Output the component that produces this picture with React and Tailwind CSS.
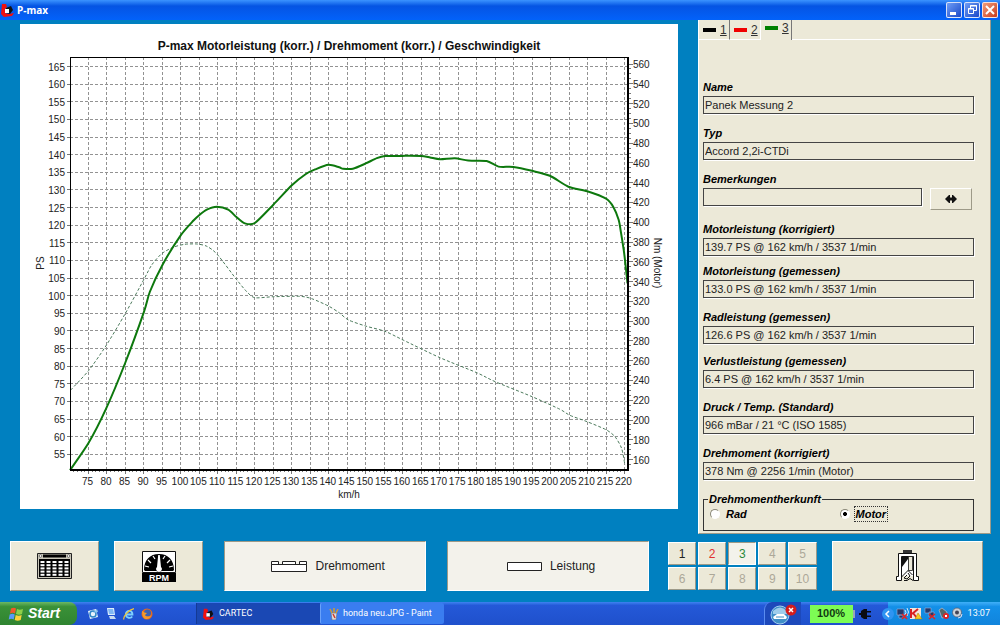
import React, { useState } from 'react';

const POWER = [
  [70, 50.5], [75, 58.2], [79.7, 67.8], [85, 81.1], [90, 95.4], [91.6, 101.1], [95, 108.7], [99.8, 116.9],
  [103.4, 121.3], [105, 122.9], [107, 124.4], [109.7, 125.2], [112.8, 124.4], [115, 122.3], [117.3, 120.5],
  [120, 120.6], [125, 125.8], [130, 131.3], [133.8, 134.5], [136.3, 135.8], [139.9, 137.1], [142.8, 136.4],
  [143.9, 136], [146.5, 136], [150, 137.5], [153, 139], [155.2, 139.6], [159.3, 139.6], [162, 139.7],
  [165, 139.6], [167.4, 139.2], [170.1, 138.7], [174.1, 139], [177.7, 138.3], [182.7, 138.2], [185.9, 136.6],
  [189.9, 136.5], [195, 135.4], [199.8, 134], [204.8, 130.9], [209.9, 129.6], [215, 127.5], [217, 125.1],
  [218.4, 121.5], [219, 118.1], [219.9, 112], [220.8, 103.5],
];

const TORQUE = [
  [70.2, 230.4], [75, 249.9], [79.7, 274.9], [85, 308], [90, 342.3], [92.1, 356.8], [94.8, 368.2],
  [97.9, 374.7], [101, 377.7], [104.3, 378], [107, 375.7], [109.8, 367.6], [115, 342.3], [117.8, 329.8],
  [120, 323.7], [125, 324.7], [132.2, 325.1], [135.4, 322.7], [139.9, 315.3], [142.8, 308.5], [145.3, 301.2],
  [150, 295], [155.2, 289.7], [160.1, 280.9], [170.1, 263], [180, 247.9], [185, 238.8], [195, 223.6],
  [202.5, 210.9], [205.2, 204.8], [209.9, 198.3], [215, 190.2], [217.4, 183.2], [219.2, 171.4], [220.1, 154.5],
];

const PLOT = { left: 50, right: 608, top: 33, bottom: 446 };

const xAt = (kmh) => 68.5 + (kmh - 75) * 3.697;
const yPs = (ps) => 42.5 + (165 - ps) * 3.525;
const yNm = (nm) => 40 + (560 - nm) * 0.989;

const range = (from, to, step) => {
  const out = [];
  for (let v = from; v <= to; v += step) out.push(v);
  return out;
};

// Catmull-Rom through all points
function curve(points, yAt) {
  const p = points.map(([a, b]) => [xAt(a), yAt(b)]);
  let d = `M${p[0][0]},${p[0][1]}`;
  for (let i = 0; i < p.length - 1; i++) {
    const a = p[i - 1] || p[i];
    const b = p[i];
    const c = p[i + 1];
    const e = p[i + 2] || c;
    d += `C${b[0] + (c[0] - a[0]) / 8},${b[1] + (c[1] - a[1]) / 8} ${c[0] - (e[0] - b[0]) / 8},${c[1] - (e[1] - b[1]) / 8} ${c[0]},${c[1]}`;
  }
  return d;
}

const FIELDS = [
  { id: 'name', label: 'Name', value: 'Panek Messung 2', gap: 'mt-3' },
  { id: 'typ', label: 'Typ', value: 'Accord 2,2i-CTDi', gap: 'mt-3' },
  { id: 'bemerkungen', label: 'Bemerkungen', value: '', gap: 'mt-3', swap: true },
  { id: 'pmot-korr', label: 'Motorleistung (korrigiert)', value: '139.7 PS @ 162 km/h / 3537 1/min', gap: 'mt-4' },
  { id: 'pmot-gem', label: 'Motorleistung (gemessen)', value: '133.0 PS @ 162 km/h / 3537 1/min', gap: 'mt-2' },
  { id: 'prad', label: 'Radleistung (gemessen)', value: '126.6 PS @ 162 km/h / 3537 1/min', gap: 'mt-3' },
  { id: 'pverl', label: 'Verlustleistung (gemessen)', value: '6.4 PS @ 162 km/h / 3537 1/min', gap: 'mt-2.5' },
  { id: 'druck', label: 'Druck / Temp. (Standard)', value: '966 mBar / 21 °C (ISO 1585)', gap: 'mt-3' },
  { id: 'mkorr', label: 'Drehmoment (korrigiert)', value: '378 Nm @ 2256 1/min (Motor)', gap: 'mt-3' },
];

const TABS = [
  { n: 1, color: 'bg-black' },
  { n: 2, color: 'bg-[#f00000]' },
  { n: 3, color: 'bg-[#008000]' },
];

const RAISED = 'bg-[#ece9d8] border border-t-white border-l-white border-b-[#9d9a88] border-r-[#9d9a88]';
const SUNKEN = 'bg-[#f3f2eb] border border-t-[#9d9a88] border-l-[#9d9a88] border-b-white border-r-white';

function CartecIcon({ className }) {
  return (
    <svg viewBox="0 0 14 14" className={className} aria-hidden="true">
      <path d="M1 1h4l1 3-2 2v4l4 1 5-1-2 3-8 1-3-3z" fill="#f01010" />
      <path d="M5 5l5-2 2 4-3 4-4-1z" fill="#101010" />
      <path d="M4 6h4v4H4z" fill="#fff" />
    </svg>
  );
}

function TitleBar() {
  return (
    <header className="h-5 flex items-center pl-px pr-0.5 bg-linear-to-b from-[#3b93ff] via-[#0554e3] via-30% to-[#0262fa] text-white">
      <CartecIcon className="w-3.5 h-3.5" />
      <h1 className="ml-0.5 text-[10px] font-bold font-['Noto_Sans',sans-serif]">P-max</h1>
      <div className="ml-auto flex gap-0.5">
        <button aria-label="Minimieren" className="w-4 h-4 rounded-xs border border-white/80 bg-linear-to-br from-[#6f9cf5] to-[#1c47c8]">
          <svg viewBox="0 0 14 14" aria-hidden="true"><path d="M3 9h6v3H3z" fill="#fff" /></svg>
        </button>
        <button aria-label="Wiederherstellen" className="w-4 h-4 rounded-xs border border-white/80 bg-linear-to-br from-[#6f9cf5] to-[#1c47c8]">
          <svg viewBox="0 0 14 14" fill="none" stroke="#fff" aria-hidden="true">
            <path d="M5.500 5V2.500h6v5H9" />
            <path d="M5 3h7" />
            <path d="M3.500 5.500h5v5h-5z" />
            <path d="M3 6h6" />
          </svg>
        </button>
        <button aria-label="Schließen" className="w-4 h-4 rounded-xs border border-white/80 bg-linear-to-br from-[#f09a78] to-[#c8381c]">
          <svg viewBox="0 0 14 14" stroke="#fff" strokeWidth="2" aria-hidden="true"><path d="M3 3l8 8M11 3l-8 8" /></svg>
        </button>
      </div>
    </header>
  );
}

function PowerChart() {
  const { left, right, top, bottom } = PLOT;
  return (
    <svg viewBox="0 0 658 485" className="w-full h-auto block bg-white font-['Liberation_Sans',Arial,sans-serif] text-[10px]" fill="#222">
      <text x="329" y="26" textAnchor="middle" className="text-[12px] font-bold" fill="#111">
        P-max Motorleistung (korr.) / Drehmoment (korr.) / Geschwindigkeit
      </text>

      {/* Grid */}
      <g stroke="#929292" strokeDasharray="3 2" shapeRendering="crispEdges">
        {range(55, 165, 5).map((v) => (
          <line key={v} x1={left} x2={right} y1={yPs(v)} y2={yPs(v)} />
        ))}
        {range(75, 220, 5).map((v) => (
          <line key={v} x1={xAt(v)} x2={xAt(v)} y1={top} y2={bottom} />
        ))}
      </g>

      {/* Ticks */}
      <g stroke="#777" shapeRendering="crispEdges">
        {range(55, 165, 5).map((v) => (
          <line key={v} x1={left - 3} x2={left} y1={yPs(v)} y2={yPs(v)} />
        ))}
        {range(155, 560, 5).map((v) => (
          <line key={v} x1={right} x2={right + (v % 20 ? 3 : 5)} y1={yNm(v)} y2={yNm(v)} />
        ))}
        {range(71, 220, 1).map((v) => (
          <line key={v} x1={xAt(v)} x2={xAt(v)} y1={bottom} y2={bottom + (v % 5 ? 2 : 4)} />
        ))}
      </g>

      <path d={curve(TORQUE, yNm)} fill="none" stroke="#4c7a5c" strokeDasharray="3 2" />
      <path d={curve(POWER, yPs)} fill="none" stroke="#0d780d" strokeWidth="2" strokeLinejoin="round" />

      {/* Frame */}
      <g stroke="#000" shapeRendering="crispEdges">
        <line x1={left} x2={right} y1={top + 0.5} y2={top + 0.5} />
        <line x1={left + 0.5} x2={left + 0.5} y1={top} y2={bottom} />
        <line x1={left} x2={right + 1} y1={bottom} y2={bottom} strokeWidth="2" />
        <line x1={right} x2={right} y1={top} y2={bottom} strokeWidth="2" />
      </g>

      <g textAnchor="end">
        {range(55, 165, 5).map((v) => (
          <text key={v} x="45" y={yPs(v) + 4}>{v}</text>
        ))}
      </g>
      <g>
        {range(160, 560, 20).map((v) => (
          <text key={v} x="613" y={yNm(v) + 4}>{v}</text>
        ))}
      </g>
      <g textAnchor="middle">
        {range(75, 220, 5).map((v) => (
          <text key={v} x={xAt(v) - 1} y="461">{v}</text>
        ))}
        <text x="329" y="474">km/h</text>
        <text transform="translate(24 239) rotate(-90)">PS</text>
        <text transform="translate(634 239) rotate(90)">Nm (Motor)</text>
      </g>
    </svg>
  );
}

function Field({ field }) {
  return (
    <div className={field.gap}>
      <label htmlFor={field.id} className="block h-4 leading-[14px] text-[11px] font-bold italic text-black">
        {field.label}
      </label>
      <div className="flex items-start gap-2">
        <input
          id={field.id}
          defaultValue={field.value}
          className="flex-1 min-w-0 h-[18px] border border-[#444] bg-[#ece9d8] px-px text-[11px] text-[#222] shadow-[1px_1px_0_#fff] outline-none"
        />
        {field.swap && (
          <button aria-label="Tauschen" className={`${RAISED} w-[42px] h-[22px] -mb-1 mr-0.5 flex items-center justify-center`}>
            <svg viewBox="0 0 12 10" className="w-3 h-2.5" fill="#111" aria-hidden="true">
              <path d="M0 5l4-4h1v2.500h2V1h1l4 4-4 4H7V6.500H5V9H4z" />
            </svg>
          </button>
        )}
      </div>
    </div>
  );
}

function MeasurementPanel() {
  const [tab, setTab] = useState(3);
  const [source, setSource] = useState('motor');

  return (
    <aside className="w-[293px] shrink-0 bg-[#ece9d8] border-l border-white border-r border-b border-r-[#9d9a88] border-b-[#9d9a88]">
      <div role="tablist" className="flex h-5 items-stretch text-xs text-[#333]">
        {TABS.map((t) => (
          <button
            key={t.n}
            role="tab"
            aria-selected={tab === t.n}
            onClick={() => setTab(t.n)}
            className={`flex items-center gap-1 pl-1 pr-0.5 w-[31px] border-r ${
              t.n === 2 ? 'border-r-white' : 'border-r-[#777]'
            } ${tab === t.n ? 'pb-1' : 'border-b border-b-white'}`}
          >
            <span className={`w-[13px] h-1 ${t.color}`} />
            <span className="underline">{t.n}</span>
          </button>
        ))}
        <div className="flex-1 border-b border-white" />
      </div>

      <div className="pl-1 pr-4 pt-7 pb-0.5">
        {FIELDS.map((f) => (
          <Field key={f.id} field={f} />
        ))}

        <fieldset className="mt-3 h-[39px] border border-[#333] px-1 text-[11px] font-bold italic text-black">
          <legend className="leading-[14px] px-px">Drehmomentherkunft</legend>
          <div className="flex items-center pl-0.5">
            {[['rad', 'Rad'], ['motor', 'Motor']].map(([id, label]) => (
              <label key={id} className="w-1/2 flex items-center gap-1">
                <input
                  type="radio"
                  name="source"
                  checked={source === id}
                  onChange={() => setSource(id)}
                  className="appearance-none w-2.5 h-2.5 rounded-full border border-[#8a8878] border-b-white border-r-white bg-white checked:bg-[radial-gradient(circle,#000_30%,#fff_40%)]"
                />
                <span className={`px-px leading-[14px] border border-dotted ${source === id ? 'border-[#333]' : 'border-transparent'}`}>
                  {label}
                </span>
              </label>
            ))}
          </div>
        </fieldset>
      </div>
    </aside>
  );
}

function TableIcon() {
  return (
    <svg viewBox="0 0 35 26" className="w-[35px] h-[26px]" aria-hidden="true">
      <path d="M.5.5h34v25H.5z" fill="#c9c6b8" stroke="#222" />
      <path d="M6 1.500h23v3H6zM2 6h31v18H2z" fill="#000" />
      <circle cx="3.500" cy="3" r="1.300" fill="#fff" stroke="#333" strokeWidth=".6" />
      <circle cx="31.500" cy="3" r="1.300" fill="#fff" stroke="#333" strokeWidth=".6" />
      {range(0, 4, 1).map((r) =>
        range(0, 4, 1).map((c) => <rect key={`${r}-${c}`} x={3.5 + c * 6} y={8 + r * 3.2} width="4" height="2" fill="#fff" />)
      )}
    </svg>
  );
}

function RpmIcon() {
  return (
    <svg viewBox="0 0 34 31" className="w-[34px] h-[31px]" aria-hidden="true">
      <path d="M.5.5h33v21H.5z" fill="#fff" stroke="#111" />
      <path d="M2 19C2 9 8 3 17 3s15 6 15 16l-1 1H20l-3 1-3-1H3z" fill="#000" />
      <path d="M3 15l4 1M6 9l3 3M11 5l2 3M23 5l-2 3M28 9l-3 3M31 15l-4 1" stroke="#fff" strokeWidth="1.200" />
      <path d="M16.200 4h1.600l1.200 12a2.800 2.800 0 1 1-4 0z" fill="#fff" />
      <path d="M0 22h34v9H0z" fill="#000" />
      <text x="17" y="30" textAnchor="middle" fill="#fff" className="text-[9px] font-bold font-['Liberation_Sans',Arial,sans-serif]">RPM</text>
    </svg>
  );
}

function DoorIcon() {
  return (
    <svg viewBox="0 0 24 32" className="w-6 h-8" aria-hidden="true">
      <path d="M8 0h9v3H8z" fill="#333" />
      <path d="M3.500 3.500h18v23h2v4h-5v-24h-12v24h-5v-4h2z" fill="#fff" stroke="#111" />
      <path d="M7 7h11v19H7z" fill="#fff" />
      <path d="M7 7h6v2l-6 8z" fill="#111" />
      <path d="M13.500 6.500h4v14h-4z" fill="#ece9d8" stroke="#111" strokeWidth=".8" />
      <path d="M13.500 20l-4 4-3 3M13.500 21l4 4M13 23l2 3-3 3-3-1 3-3M9 30.500h3l3-2 3 2" fill="none" stroke="#111" />
    </svg>
  );
}

function ButtonBar() {
  const [modes, setModes] = useState({ drehmoment: true, leistung: true });
  const [slot, setSlot] = useState(3);
  const toggle = (key) => setModes({ ...modes, [key]: !modes[key] });

  const slotColor = (n) => {
    if (n === 1) return 'text-[#222]';
    if (n === 2) return 'text-[#e03030]';
    if (n === 3) return 'text-[#2a8a3a]';
    return 'text-[#aca899]';
  };

  return (
    <div className="flex h-[50px] pl-2.5 pr-[17px] mt-[7px] text-xs text-[#222]">
      <button aria-label="Tabelle" className={`${RAISED} grow-[88] basis-0 flex items-center justify-center`}>
        <TableIcon />
      </button>
      <button aria-label="Drehzahl" className={`${RAISED} ml-[15px] grow-[88] basis-0 flex items-center justify-center`}>
        <RpmIcon />
      </button>
      <button
        aria-pressed={modes.drehmoment}
        onClick={() => toggle('drehmoment')}
        className={`${modes.drehmoment ? SUNKEN : RAISED} ml-[21px] grow-[202] basis-0 flex items-center justify-center gap-2`}
      >
        <svg viewBox="0 0 36 11" className="w-9 h-[11px] ml-1.5" fill="#fff" stroke="#222" aria-hidden="true">
          <path d="M.5 3.500h35v7H.5zM.5.5h7v3h-7zM11.500.5h13v3h-13zM28.500.5h7v3h-7z" />
        </svg>
        Drehmoment
      </button>
      <button
        aria-pressed={modes.leistung}
        onClick={() => toggle('leistung')}
        className={`${modes.leistung ? SUNKEN : RAISED} ml-[21px] grow-[202] basis-0 flex items-center justify-center gap-2`}
      >
        <svg viewBox="0 0 35 9" className="w-[35px] h-[9px] ml-1.5" fill="#fff" stroke="#222" aria-hidden="true">
          <path d="M.5.5h34v8H.5z" />
        </svg>
        Leistung
      </button>
      <div className="ml-[19px] grow-[150] basis-0 grid grid-cols-5 gap-0.5 py-px">
        {range(1, 10, 1).map((n) => (
          <button
            key={n}
            disabled={n > 3}
            onClick={() => setSlot(n)}
            className={`${slot === n ? SUNKEN : RAISED} ${slotColor(n)}`}
          >
            {n}
          </button>
        ))}
      </div>
      <button aria-label="Beenden" className={`${RAISED} ml-[15px] grow-[151] basis-0 flex items-center justify-center`}>
        <DoorIcon />
      </button>
    </div>
  );
}

function WindowsFlag() {
  return (
    <svg viewBox="0 0 16 14" className="w-4 h-3.5" aria-hidden="true">
      <path d="M3 1.500c2-1 3.500-1 5 0L7 6.500c-1.500-1-3-1-5 0z" fill="#f0582a" />
      <path d="M9 2c2 1 3.500 1 6 0l-1 5c-2 1-4 1-6 0z" fill="#8ed04a" />
      <path d="M1.700 7.500c2-1 3.500-1 5 0l-1 5c-1.500-1-3-1-5 0z" fill="#5a9af8" />
      <path d="M7.700 8c2 1 4 1 6 0l-1 5c-2 1-4 1-6 0z" fill="#fcd23a" />
    </svg>
  );
}

function QuickLaunch() {
  return (
    <div className="flex items-center gap-1.5 ml-2.5">
      <button aria-label="Outlook Express">
        <svg viewBox="0 0 12 12" className="w-3 h-3" aria-hidden="true">
          <path d="M1 3l8-2 2 8-8 2z" fill="#e8f3fc" />
          <circle cx="6" cy="6" r="3" fill="none" stroke="#2e86c8" strokeWidth="1.500" />
          <path d="M6 5l4-4 1 3z" fill="#8cc4ee" />
        </svg>
      </button>
      <button aria-label="Desktop anzeigen">
        <svg viewBox="0 0 12 12" className="w-3 h-3" aria-hidden="true">
          <path d="M2 0h7l1 7H3z" fill="#dceefc" />
          <path d="M3 1h5l1 5H4z" fill="#7fb8f4" />
          <path d="M4 8h5l2 3H5z" fill="#c8dcf0" />
        </svg>
      </button>
      <button aria-label="Internet Explorer">
        <svg viewBox="0 0 12 12" className="w-3 h-3" fill="none" aria-hidden="true">
          <path d="M3 6.500h6.500C9.500 1.500 3 2 2.800 6.500 3 10.500 8 10.500 9.200 8.500" stroke="#7cd0ff" strokeWidth="1.800" />
          <path d="M1 11.500C-.5 9 6 1.500 11 .7" stroke="#f4c430" strokeWidth="1.200" />
        </svg>
      </button>
      <button aria-label="Firefox">
        <svg viewBox="0 0 12 12" className="w-3 h-3" aria-hidden="true">
          <circle cx="6" cy="6" r="5.500" fill="#e86a1c" />
          <circle cx="6.500" cy="5" r="3.500" fill="#3a62b4" />
          <path d="M1 3c2 1 3 2 5 2L4 7c1 2 5 2 6 0 0 3-3 4-5 4S1 8 1 3z" fill="#f49a2c" />
        </svg>
      </button>
    </div>
  );
}

function TrayIcons() {
  return (
    <svg viewBox="0 0 70 13" className="w-[70px] h-[13px] shrink-0" aria-hidden="true">
      <path d="M1 2h7v6H1zM3 8h4v3H3z" fill="#26396b" stroke="#9fb4dc" strokeWidth=".6" />
      <path d="M9 3q2 2 0 5M11 1q3 4 0 8" fill="none" stroke="#d6e8fb" />
      <path d="M6 7l5 5M11 7l-5 5" stroke="#e02424" strokeWidth="1.600" />
      <path d="M14 1h11v11H14z" fill="#f3e4dc" />
      <path d="M15 2v9M16 7l6-5M17 6l4 5" stroke="#d82020" strokeWidth="2" />
      <path d="M22 6l4 6h-7z" fill="#f8c820" stroke="#a67808" strokeWidth=".5" />
      <path d="M29 1h6v5h-6zM33 5h5v5h-5z" fill="#26396b" stroke="#9fb4dc" strokeWidth=".6" />
      <path d="M33 7l6 5M39 7l-6 5" stroke="#e02424" strokeWidth="1.600" />
      <path d="M43 3l3-2 5 4-1 5-4 1z" fill="#566" stroke="#ccd" strokeWidth=".6" />
      <circle cx="50" cy="9" r="3" fill="#e02424" />
      <path d="M49 8l2 2M51 8l-2 2" stroke="#fff" />
      <circle cx="61" cy="5.500" r="4.500" fill="#ccd2d8" stroke="#556" strokeWidth=".7" />
      <circle cx="61" cy="5.500" r="2" fill="#445" />
      <path d="M62 11q4 0 4-4" fill="none" stroke="#dde" />
    </svg>
  );
}

function Taskbar() {
  return (
    <footer className="h-[23px] flex items-stretch bg-linear-to-b from-[#3f83f0] via-[#2459d8] via-15% to-[#1f50cc] text-white text-[9px] font-[Roboto,'Noto_Sans',sans-serif]">
      <button className="w-[77px] flex items-center gap-1 pl-2 rounded-r-lg bg-linear-to-b from-[#6cb865] via-[#3a9138] via-20% to-[#2f8430] text-[14px] font-bold italic font-['Liberation_Sans',Arial,sans-serif]">
        <WindowsFlag />
        Start
      </button>
      <QuickLaunch />
      <div className="flex ml-[43px] py-px">
        <button className="w-[124px] flex items-center gap-1 pl-1.5 bg-[#1a48b4] border-l border-[#143a94]">
          <CartecIcon className="w-3 h-3" />
          CARTEC
        </button>
        <button className="w-[124px] flex items-center gap-1 pl-2 rounded-xs bg-[#3a7df0] border-l border-[#6aa2fa]">
          <svg viewBox="0 0 10 12" className="w-2.5 h-3" aria-hidden="true">
            <path d="M2 5h6l-1 7H3z" fill="#d8dce0" stroke="#667" strokeWidth=".6" />
            <path d="M3 5L1 1M5 5V0M7 5l2-4" stroke="#d49a30" strokeWidth="1.500" />
            <path d="M4 6l2 4" stroke="#d43c28" strokeWidth="1.500" />
          </svg>
          honda neu.JPG - Paint
        </button>
      </div>

      <div className="ml-auto flex items-center">
        <div className="w-[37px] h-full flex items-center justify-center rounded-tl-lg bg-[#1d49bb] border-l border-[#5a8cf0]">
          <svg viewBox="0 0 28 22" className="w-7 h-[22px]" aria-hidden="true">
            <circle cx="11" cy="12" r="9" fill="#3f8fc8" stroke="#a4cff0" />
            <path d="M4 8q7-7 14 0v3H4z" fill="#9fcdec" />
            <path d="M4 14l4-3h7l3 3-1 2H5z" fill="#fff" />
            <path d="M7 14h8" stroke="#3f8fc8" />
            <circle cx="22" cy="7" r="5.500" fill="#d41c1c" />
            <path d="M20 5l4 4M24 5l-4 4" stroke="#fff" strokeWidth="1.500" />
          </svg>
        </div>
        <div className="ml-[9px] w-[43px] h-[18px] flex items-center justify-center bg-[#7dfc54] text-[#123a12] text-[11px] font-bold font-['Liberation_Sans',Arial,sans-serif]">
          100%
        </div>
        <div className="w-0.5 h-2 bg-[#9aa4b8]" />
        <svg viewBox="0 0 14 12" className="w-3.5 h-3 ml-1" fill="#0a0a12" aria-hidden="true">
          <path d="M0 5h2V3l3-2h3v2h4v1.500H8v3h4V9H8v2H5L2 9V7H0z" />
        </svg>
        <div className="relative ml-[15px] h-full flex items-center pl-2 pr-2.5 bg-linear-to-b from-[#3fb0f8] via-[#1390e8] via-20% to-[#1184dc]">
          <button
            aria-label="Ausgeblendete Symbole"
            className="absolute -left-1.5 top-1.5 w-3 h-3 rounded-full bg-[#2f94f2] flex items-center justify-center"
          >
            <svg viewBox="0 0 8 8" className="w-2 h-2" fill="none" stroke="#fff" strokeWidth="1.500" aria-hidden="true">
              <path d="M5 1L2 4l3 3" />
            </svg>
          </button>
          <TrayIcons />
          <time className="ml-0.5 text-[9px]">13:07</time>
        </div>
      </div>
    </footer>
  );
}

export default function App() {
  return (
    <div className="min-h-screen flex flex-col bg-[#0080c0] font-['Liberation_Sans',Arial,sans-serif]">
      <TitleBar />
      <main className="flex-1">
        <div className="flex items-start gap-5 pl-5 pr-[9px]">
          <div className="flex-1 min-w-0 pt-1">
            <PowerChart />
          </div>
          <MeasurementPanel />
        </div>
        <ButtonBar />
      </main>
      <Taskbar />
    </div>
  );
}
